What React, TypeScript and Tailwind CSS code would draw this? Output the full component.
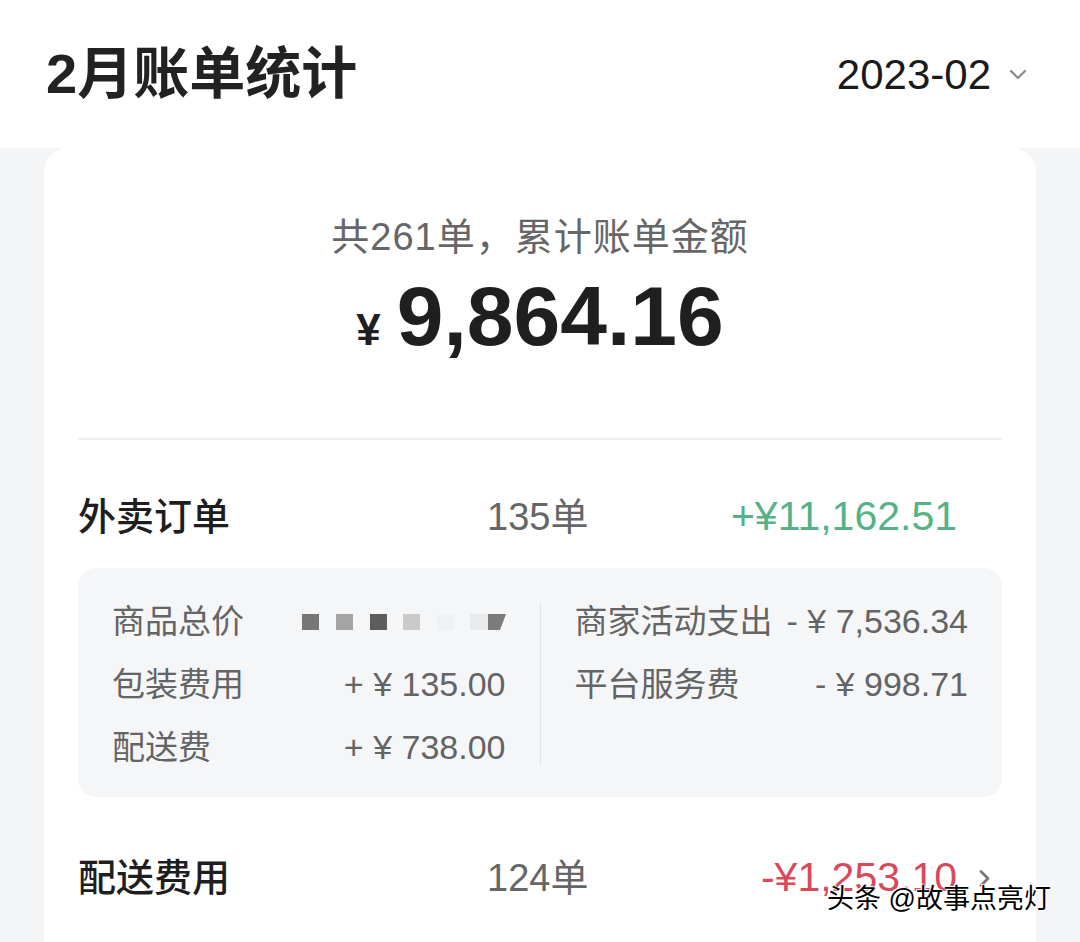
import React from 'react';

const FONT = "font-['Liberation_Sans','Noto_Sans_CJK_SC',sans-serif]";

function ChevronDown() {
  return (
    <svg width="18" height="11" viewBox="0 0 18 11" fill="none">
      <path d="M2 2l7 7 7-7" stroke="#8a8a8a" strokeWidth="2.2" strokeLinecap="round" strokeLinejoin="round" />
    </svg>
  );
}

function ChevronRight() {
  return (
    <svg width="13" height="19" viewBox="0 0 13 19" fill="none">
      <path d="M3 2.5l7 7-7 7" stroke="#777" strokeWidth="2.8" strokeLinecap="round" strokeLinejoin="round" />
    </svg>
  );
}

// blurred / pixelated amount in the screenshot
function Mosaic() {
  return (
    <svg width="204" height="18" viewBox="0 0 204 18">
      <rect x="0" y="1" width="17" height="16" fill="#777" />
      <rect x="34" y="1" width="17" height="16" fill="#a4a4a4" />
      <rect x="68" y="1" width="17" height="16" fill="#5d5d5d" />
      <rect x="101" y="1" width="17" height="16" fill="#cacaca" />
      <rect x="135" y="1" width="17" height="16" fill="#f0f1f3" />
      <rect x="168" y="1" width="18" height="16" fill="#eaebed" />
      <path d="M186 1h18l-6 16h-12z" fill="#7b7b7b" />
    </svg>
  );
}

type Item = { label: string; value: React.ReactNode };

function DetailColumn({ items }: { items: Item[] }) {
  return (
    <div className="flex-1 flex flex-col px-[34px]">
      {items.map((it) => (
        <div key={it.label} className="h-[63px] flex items-center justify-between text-[#646464]">
          <span className="text-[33px]">{it.label}</span>
          <span className="text-[34px]">{it.value}</span>
        </div>
      ))}
    </div>
  );
}

function SummaryRow({
  label,
  count,
  amount,
  color,
  arrow,
}: {
  label: string;
  count: string;
  amount: string;
  color: string;
  arrow?: boolean;
}) {
  return (
    <div className="flex items-center">
      <span className="w-[409px] text-[38px] font-medium text-[#1e1e1e]">{label}</span>
      <span className="flex-1 text-[38px] text-[#666]">{count}</span>
      <span className={`text-[41px] ${color}`}>{amount}</span>
      <span className="w-[45px] pl-[21px] flex items-center">{arrow && <ChevronRight />}</span>
    </div>
  );
}

export default function App() {
  const left: Item[] = [
    { label: '商品总价', value: <Mosaic /> },
    { label: '包装费用', value: '+ ¥ 135.00' },
    { label: '配送费', value: '+ ¥ 738.00' },
  ];
  const right: Item[] = [
    { label: '商家活动支出', value: '- ¥ 7,536.34' },
    { label: '平台服务费', value: '- ¥ 998.71' },
  ];

  return (
    <div className={`relative w-[1080px] h-[942px] overflow-hidden bg-[#f4f5f7] flex flex-col ${FONT}`}>
      {/* header */}
      <div className="h-[148px] shrink-0 bg-white flex items-center justify-between pl-[46px] pr-[53px]">
        <h1 className="text-[56px] font-bold text-[#222] leading-none">2月账单统计</h1>
        <div className="flex items-center gap-[18px]">
          <span className="text-[42px] text-[#1a1a1a]">2023-02</span>
          <ChevronDown />
        </div>
      </div>

      {/* card */}
      <div className="flex-1 mx-[44px] bg-white rounded-t-[24px] px-[34px] flex flex-col">
        <div className="pt-[66px] text-center text-[38px] leading-[46px] tracking-[1px] text-[#666]">
          共261单，累计账单金额
        </div>
        <div className="mt-[14px] flex items-baseline justify-center text-[#1f1f1f] font-bold leading-none">
          <span className="text-[44px] mr-[16px]">¥</span>
          <span className="text-[84px]">9,864.16</span>
        </div>

        <div className="mt-[80px] h-[2px] bg-[#efefef]" />

        <div className="pt-[26px] h-[128px] flex flex-col justify-center">
          <SummaryRow label="外卖订单" count="135单" amount="+¥11,162.51" color="text-[#55b286]" />
        </div>

        <div className="bg-[#f5f6f8] rounded-[18px] pt-[22px] pb-[18px] flex">
          <DetailColumn items={left} />
          <div className="w-px self-center h-[163px] bg-[#e2e3e5]" />
          <DetailColumn items={right} />
        </div>

        <div className="pt-[50px] h-[112px] flex flex-col justify-center">
          <SummaryRow label="配送费用" count="124单" amount="-¥1,253.10" color="text-[#d9495a]" arrow />
        </div>
      </div>

      {/* watermark */}
      <div className="absolute left-[827px] top-[886px] text-[27px] text-black leading-none [text-shadow:0_0_2px_#fff,0_0_2px_#fff,1px_1px_0_#fff,-1px_-1px_0_#fff]">
        头条 @故事点亮灯
      </div>
    </div>
  );
}
